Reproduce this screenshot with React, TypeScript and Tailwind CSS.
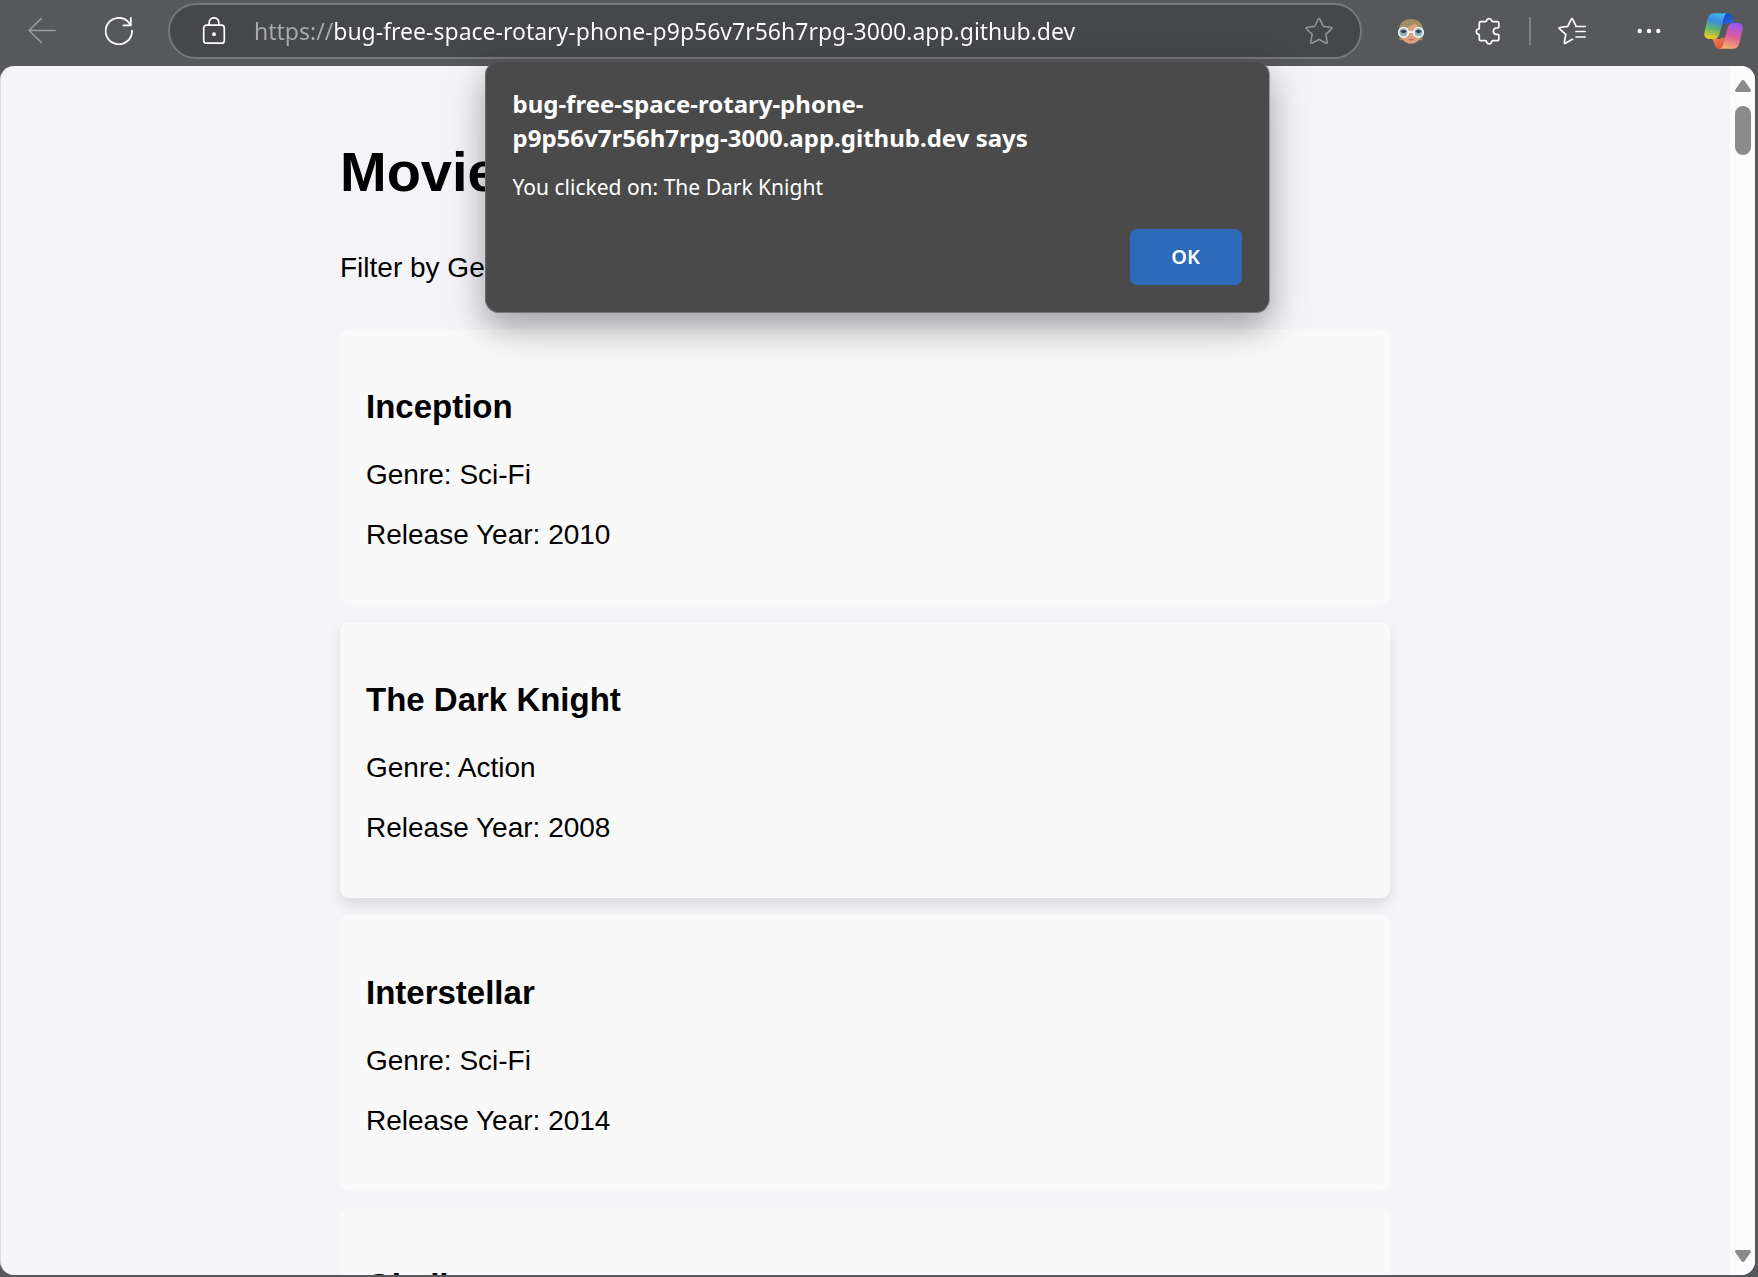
import type { ReactNode } from "react";

type Movie = { title: string; genre: string; year: number; active?: boolean };

const movies: Movie[] = [
  { title: "Inception", genre: "Sci-Fi", year: 2010 },
  { title: "The Dark Knight", genre: "Action", year: 2008, active: true },
  { title: "Interstellar", genre: "Sci-Fi", year: 2014 },
  { title: "Gladiator", genre: "Action", year: 2000 },
];

function ToolButton({ label, children }: { label: string; children: ReactNode }) {
  return (
    <button type="button" aria-label={label} className="flex size-[42px] shrink-0 items-center justify-center">
      {children}
    </button>
  );
}

function BackIcon() {
  return (
    <svg viewBox="0 0 28 28" className="size-7" fill="none" stroke="#9b9ca0" strokeWidth="1.6" strokeLinecap="round" strokeLinejoin="round">
      <path d="M27.2 13.5H1M13.2 1.7L1 13.5l12.2 11.8" />
    </svg>
  );
}

function RefreshIcon() {
  return (
    <svg viewBox="0 0 28 28" className="size-7" fill="none" stroke="#fff" strokeWidth="1.8" strokeLinecap="round" strokeLinejoin="round">
      <path d="M27 13.6A13.2 13.2 0 1 1 22.6 4.2L25.6 8" />
      <path d="M25.8 1v7.4h-7.4" />
    </svg>
  );
}

function LockIcon() {
  return (
    <svg viewBox="0 0 24 28" className="h-7 w-6" fill="none" stroke="#fff" strokeWidth="1.7">
      <rect x="1.7" y="8.2" width="20.6" height="18" rx="2.8" />
      <path d="M7.2 8V5.6a4.8 4.8 0 0 1 9.600 0V8" />
      <circle cx="12" cy="17.200" r="1.9" fill="#fff" stroke="none" />
    </svg>
  );
}

function StarIcon() {
  return (
    <svg viewBox="0 0 28 28" className="size-7" fill="none" stroke="#96979b" strokeWidth="1.5" strokeLinejoin="round">
      <path d="M13.300 1.900a.8.8 0 0 1 1.400 0l3.500 7.300 8 1.200a.8.8 0 0 1 .45 1.350l-5.800 5.650 1.400 8a.8.8 0 0 1-1.150.85L14 22.500l-7.100 3.750a.8.8 0 0 1-1.150-.85l1.400-8-5.800-5.650a.8.8 0 0 1 .45-1.350l8-1.200z" />
    </svg>
  );
}

function AvatarIcon() {
  return (
    <svg viewBox="0 0 28 28" className="size-7">
      <path d="M2 15C1 7 6.500 2 14 2s13 5 12 13l-.8 8.500-2.700-.4H5.500l-2.700.4z" fill="#a38d62" />
      <path d="M4.200 15c0-3 5.800-4.500 9.300-6 2-.8 3.600-1.600 4.500-2.800 1.500 2.400 5.800 4.600 5.800 8.800v1.500c0 6-4.300 10.300-9.800 10.300S4.200 22.500 4.200 16.500z" fill="#dba07c" />
      <path d="M11.500 22h5c-.6 1.300-1.500 1.500-2.500 1.500s-1.900-.2-2.500-1.500z" fill="#b9644f" />
      <path d="M10.500 15h7" stroke="#fff" strokeWidth="1.6" />
      <circle cx="6.500" cy="15.400" r="4.800" fill="#8fb9c4" stroke="#fff" strokeWidth="1.500" />
      <circle cx="21.500" cy="15.400" r="4.800" fill="#8fb9c4" stroke="#fff" strokeWidth="1.500" />
      <path d="M3.300 14.600a3.600 3.600 0 0 1 6.400 0q-1.600 1.800-3.200 1.800t-3.200-1.800zM18.300 14.600a3.600 3.600 0 0 1 6.400 0q-1.600 1.800-3.200 1.800t-3.200-1.800z" fill="#37474d" />
    </svg>
  );
}

function PuzzleIcon() {
  return (
    <svg viewBox="0 0 28 28" className="size-7" fill="none" stroke="#fff" strokeWidth="1.7" strokeLinejoin="round">
      <path d="M11.400 4.700c.9 0 1-.5 1.200-1.200a2.600 2.600 0 0 1 5 0c.2.700.3 1.200 1.200 1.200h4.500a1.500 1.500 0 0 1 1.500 1.500v3.900c0 .6-.4.9-1 .9h-1.200a3.200 3.200 0 0 0 0 6.400h1.200c.6 0 1 .3 1 .9v3.900a1.500 1.500 0 0 1-1.500 1.500h-4.500c-.9 0-1 .5-1.200 1.200a2.600 2.600 0 0 1-5 0c-.2-.7-.3-1.200-1.200-1.200H6.800a1.500 1.500 0 0 1-1.500-1.500v-3.900c0-.9-.5-1-1.200-1.200a2.600 2.600 0 0 1 0-5c.7-.2 1.200-.3 1.200-1.200V6.200a1.500 1.500 0 0 1 1.500-1.500z" />
    </svg>
  );
}

function FavoritesIcon() {
  return (
    <svg viewBox="0 0 28 28" className="size-7" fill="none" stroke="#fff" strokeWidth="1.7" strokeLinecap="round" strokeLinejoin="round">
      <path d="M14.500 22.300l-7.200 4a.7.7 0 0 1-1-.8l1.500-8.100L1.300 11.700a.7.7 0 0 1 .4-1.200l8-1.200 3.600-7.200a.7.7 0 0 1 1.300 0l3.500 7" />
      <path d="M18 9.500h9.200M18 14.500h9.200M18 20h9.200" />
    </svg>
  );
}

function MoreIcon() {
  return (
    <svg viewBox="0 0 28 28" className="size-7" fill="#fff">
      <circle cx="4.700" cy="14" r="2.200" />
      <circle cx="14" cy="14" r="2.200" />
      <circle cx="23.300" cy="14" r="2.200" />
    </svg>
  );
}

function CopilotIcon() {
  return (
    <svg viewBox="0 0 116 108" className="h-9 w-[39px]">
      <defs>
        <linearGradient id="cpLeft" x1="0.6" y1="0" x2="0.35" y2="1">
          <stop offset="0" stopColor="#3fb8f0" />
          <stop offset="0.3" stopColor="#3d8de0" />
          <stop offset="0.62" stopColor="#5fb56b" />
          <stop offset="1" stopColor="#f2cd25" />
        </linearGradient>
        <linearGradient id="cpRight" x1="0.65" y1="0" x2="0.35" y2="1">
          <stop offset="0" stopColor="#9a55ee" />
          <stop offset="0.5" stopColor="#dc5b9c" />
          <stop offset="1" stopColor="#f5b068" />
        </linearGradient>
        <linearGradient id="cpTop" x1="0" y1="0" x2="1" y2="1">
          <stop offset="0" stopColor="#1740b8" />
          <stop offset="1" stopColor="#2a6de8" />
        </linearGradient>
        <linearGradient id="cpBottom" x1="0" y1="0" x2="1" y2="1">
          <stop offset="0" stopColor="#f5924c" />
          <stop offset="1" stopColor="#d93f3c" />
        </linearGradient>
      </defs>
      <path d="M56 1h16c7 0 10 4 12 11l4 12c1 4 4 6 8 6H76c-9 0-13 3-16 4H50z" fill="url(#cpTop)" />
      <path d="M60 107H44c-7 0-10-4-12-11l-4-12c-1-4-4-6-8-6h20c9 0 13-3 16-4h10z" fill="url(#cpBottom)" />
      <path d="M30 1h42c-7 0-11 6-13 14L46 62c-3 11-8 16-16 16H15C4 78-2 70 1 57L10 19C13 7 19 1 30 1z" fill="url(#cpLeft)" />
      <path d="M86 107H44c7 0 11-6 13-14l13-47c3-11 8-16 16-16h15c11 0 17 8 14 21l-9 38c-3 12-9 18-20 18z" fill="url(#cpRight)" />
    </svg>
  );
}

function Toolbar() {
  return (
    <header className="flex h-[66px] shrink-0 items-center bg-[#57585c] pr-3.5 pb-1 pl-[21px] font-['Noto_Sans',sans-serif]">
      <ToolButton label="Back">
        <BackIcon />
      </ToolButton>
      <div className="ml-[35px] flex">
        <ToolButton label="Refresh">
          <RefreshIcon />
        </ToolButton>
      </div>
      <div className="ml-7 flex h-14 min-w-0 flex-1 items-center rounded-full border-2 border-[#77787c] bg-[#46474b] pr-5 pl-[23px]">
        <ToolButton label="Site information">
          <LockIcon />
        </ToolButton>
        <input
          type="text"
          aria-label="Address"
          readOnly
          value="https://bug-free-space-rotary-phone-p9p56v7r56h7rpg-3000.app.github.dev"
          className="ml-[19px] h-10 min-w-0 flex-1 bg-[linear-gradient(90deg,#a9aaac_79px,#ffffff_79px)] bg-clip-text text-[23px] text-transparent outline-none"
        />
        <ToolButton label="Add to favorites">
          <StarIcon />
        </ToolButton>
      </div>
      <div className="ml-7 flex items-center gap-[35px]">
        <ToolButton label="Profile">
          <AvatarIcon />
        </ToolButton>
        <ToolButton label="Extensions">
          <PuzzleIcon />
        </ToolButton>
      </div>
      <div className="mx-5 h-7 w-[2px] bg-[#7f8084]" />
      <div className="flex items-center gap-[35px]">
        <ToolButton label="Favorites">
          <FavoritesIcon />
        </ToolButton>
        <ToolButton label="Settings and more">
          <MoreIcon />
        </ToolButton>
      </div>
      <div className="ml-8 flex">
        <ToolButton label="Copilot">
          <CopilotIcon />
        </ToolButton>
      </div>
    </header>
  );
}

function MovieCard({ movie }: { movie: Movie }) {
  return (
    <article
      className={
        movie.active
          ? "rounded-[9px] bg-[#f9f9f9] px-[26px] pt-[59px] pb-[54px] shadow-[0_7px_14px_rgba(0,0,0,0.1)]"
          : "rounded-[9px] bg-[#f9f9f9] px-[26px] pt-[59px] pb-[54px]"
      }
    >
      <h3 className="text-[33px] leading-[38px] font-bold">{movie.title}</h3>
      <p className="mt-[33px] text-[28px] leading-8">Genre: {movie.genre}</p>
      <p className="mt-7 text-[28px] leading-8">Release Year: {movie.year}</p>
    </article>
  );
}

function Scrollbar() {
  return (
    <div className="flex w-[25px] shrink-0 flex-col items-center bg-[#fcfcfc] pt-3.5 pb-[13px]" aria-hidden="true">
      <svg viewBox="0 0 16 12" className="h-3 w-4" fill="#8b8b8b">
        <path d="M6.300 1a2.200 2.200 0 0 1 3.400 0l5.900 8.500c.8 1.200.2 2.500-1.200 2.500H1.600C.2 12-.4 10.700.4 9.500z" />
      </svg>
      <div className="mt-3.5 h-[49px] w-4 rounded-full bg-[#8b8b8b]" />
      <svg viewBox="0 0 16 12" className="mt-auto h-3 w-4 rotate-180" fill="#8b8b8b">
        <path d="M6.300 1a2.200 2.200 0 0 1 3.400 0l5.900 8.500c.8 1.200.2 2.500-1.200 2.500H1.600C.2 12-.4 10.700.4 9.500z" />
      </svg>
    </div>
  );
}

function AlertDialog() {
  return (
    <div className="absolute inset-x-0 -top-[5px] flex justify-center pr-px">
      <div
        role="alertdialog"
        aria-labelledby="alert-title"
        aria-describedby="alert-message"
        className="flex w-[785px] flex-col rounded-[14px] border border-t-[#55565a] border-r-[#98989b] border-b-[#77777a] border-l-[#6a6a6c] bg-[#4a4a4a] px-[27px] pt-[25px] pb-[27px] font-['Noto_Sans',sans-serif] text-white shadow-[0_14px_50px_rgba(0,0,0,0.18),0_14px_28px_rgba(0,0,0,0.2)]"
      >
        <h2 id="alert-title" className="text-[24px] leading-[34px] font-bold">
          bug-free-space-rotary-phone-
          <br />
          p9p56v7r56h7rpg-3000.app.github.dev says
        </h2>
        <p id="alert-message" className="mt-[18px] text-[21px] leading-7">
          You clicked on: The Dark Knight
        </p>
        <button type="button" className="mt-7 h-14 w-28 self-end rounded-[7px] bg-[#2d6ab9] text-[20px] font-semibold">
          OK
        </button>
      </div>
    </div>
  );
}

export default function App() {
  return (
    <div className="flex h-screen flex-col bg-[#57585c] text-black">
      <Toolbar />
      <div className="relative mr-[3px] mb-[2px] min-h-0 flex-1">
        <div className="flex h-full overflow-hidden rounded-[14px] border-l border-[#dcdce0] bg-[#f4f4f9]">
          <main className="min-w-0 flex-1 overflow-hidden pr-px font-['Liberation_Sans',Arial,sans-serif]">
            <div className="mx-auto flex max-w-[1050px] flex-col pt-[74px]">
              <h1 className="text-[56px] leading-[64px] font-bold">Movie List</h1>
              <div className="mt-12 flex items-center gap-2 text-[28px] leading-8">
                <label htmlFor="genre">Filter by Genre:</label>
                <select id="genre" className="h-8 bg-white text-[23px]">
                  <option>All</option>
                  <option>Sci-Fi</option>
                  <option>Action</option>
                </select>
              </div>
              <div className="mt-[45px] flex flex-col gap-[17px]">
                {movies.map((movie) => (
                  <MovieCard key={movie.title} movie={movie} />
                ))}
              </div>
            </div>
          </main>
          <Scrollbar />
        </div>
        <AlertDialog />
      </div>
    </div>
  );
}
